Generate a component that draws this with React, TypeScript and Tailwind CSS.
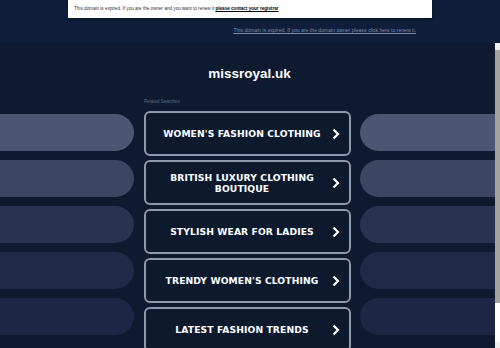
import * as React from "react";

const searches = [
  ["WOMEN'S FASHION CLOTHING"],
  ["BRITISH LUXURY CLOTHING", "BOUTIQUE"],
  ["STYLISH WEAR FOR LADIES"],
  ["TRENDY WOMEN'S CLOTHING"],
  ["LATEST FASHION TRENDS"],
];

const pillColors = [
  "bg-[#4b5672]",
  "bg-[#3a4662]",
  "bg-[#273350]",
  "bg-[#1e2a47]",
  "bg-[#1b2744]",
];

const Chevron = () => (
  <svg width="8" height="12" viewBox="0 0 8 12" className="shrink-0">
    <path d="M1.5 1.5 L6 6 L1.5 10.5" fill="none" stroke="#ffffff" strokeWidth="2.2" />
  </svg>
);

const Pills = ({ side }: { side: "left" | "right" }) => (
  <div className="flex flex-1 flex-col gap-[9px] pt-[71px]">
    {pillColors.map((c) => (
      <div
        key={c}
        className={`h-[37px] ${c} ${
          side === "left" ? "-ml-8 mr-[10px] rounded-r-full" : "ml-[9px] -mr-8 rounded-l-full"
        }`}
      />
    ))}
  </div>
);

const App = () => {
  return (
    <div className="h-[348px] w-[500px] overflow-hidden bg-[#0e1a2f] font-['Liberation_Sans',Arial,sans-serif]">
      <div className="h-[43px] bg-[#0f1f3b]">
        <div className="mx-auto flex h-[18px] w-[364px] items-center bg-white px-[6px] shadow-[0_1px_3px_rgba(0,0,0,0.5)]">
          <span className="text-[4.6px] text-[#333]">
            This domain is expired. If you are the owner and you want to renew it{" "}
            <span className="font-bold text-black underline">please contact your registrar</span>
          </span>
        </div>
        <div className="mt-[9px] flex justify-end pr-[84px]">
          <span className="text-[5.1px] text-[#7e8ca6] underline">
            This domain is expired. If you are the domain owner please click here to renew it.
          </span>
        </div>
      </div>

      <div className="flex h-[305px]">
        <div className="flex w-[495px]">
          <Pills side="left" />

          <div className="flex w-[207px] flex-col">
            <h1 className="mt-[23px] pl-[4px] text-center text-[13.5px] font-bold leading-4 text-white">
              missroyal.uk
            </h1>
            <div className="mt-[17px] text-[4.5px] leading-[6px] text-[#5d6b84]">Related Searches</div>
            <div className="mt-[6px] flex flex-col gap-[4px]">
              {searches.map((lines) => (
                <div
                  key={lines[0]}
                  className="flex h-[45px] items-center rounded-[6px] border-2 border-[#8d99ad] bg-[#0d1a2e] pl-[10px] pr-[9px] font-['DejaVu_Sans',Verdana,sans-serif] text-[9.2px] font-bold leading-[11px] tracking-[0.1px] text-white"
                >
                  <div className="flex-1 pr-[4px] text-center">
                    {lines.map((l) => (
                      <div key={l}>{l}</div>
                    ))}
                  </div>
                  <Chevron />
                </div>
              ))}
            </div>
          </div>

          <Pills side="right" />
        </div>

        <div className="flex w-[5px] flex-col bg-white">
          <div className="h-[7px] bg-[#f0f0f0]" />
          <div className="h-[253px] bg-[#a3a3a3]" />
          <div className="flex-1" />
          <div className="h-[6px] bg-[#f0f0f0]" />
        </div>
      </div>
    </div>
  );
};

export default App;
